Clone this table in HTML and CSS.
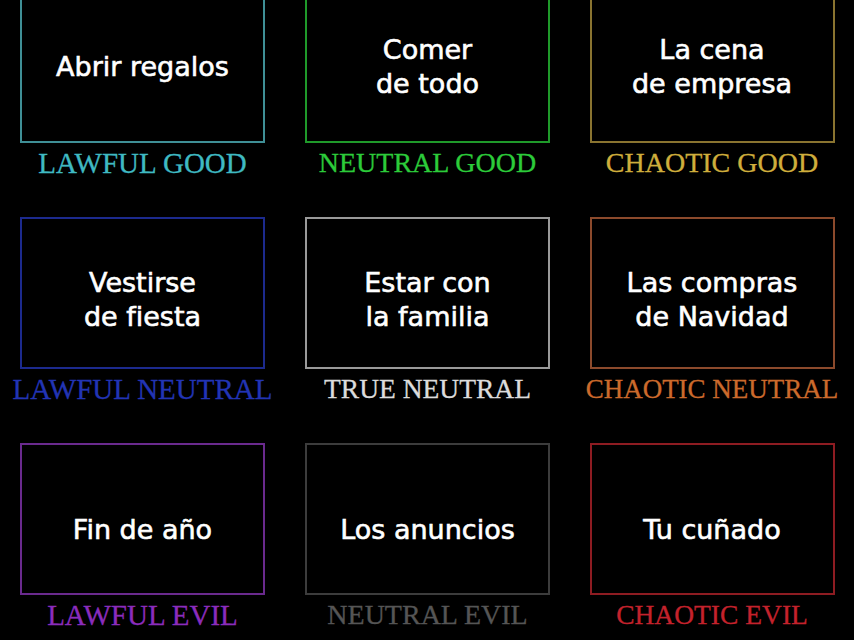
FILE: index.html
```html
<!DOCTYPE html>
<html lang="es">
<head>
<meta charset="utf-8">
<title>Alignment chart</title>
<link rel="stylesheet" href="styles.css">
</head>
<body>
<main class="chart">
  <section class="cell lg">
    <div class="box">Abrir regalos</div>
    <div class="label">LAWFUL GOOD</div>
  </section>
  <section class="cell ng">
    <div class="box">Comer<br>de todo</div>
    <div class="label">NEUTRAL GOOD</div>
  </section>
  <section class="cell cg">
    <div class="box">La cena<br>de empresa</div>
    <div class="label">CHAOTIC GOOD</div>
  </section>

  <section class="cell ln row2">
    <div class="box">Vestirse<br>de fiesta</div>
    <div class="label">LAWFUL NEUTRAL</div>
  </section>
  <section class="cell tn row2">
    <div class="box">Estar con<br>la familia</div>
    <div class="label">TRUE NEUTRAL</div>
  </section>
  <section class="cell cn row2">
    <div class="box">Las compras<br>de Navidad</div>
    <div class="label">CHAOTIC NEUTRAL</div>
  </section>

  <section class="cell le row3">
    <div class="box">Fin de año</div>
    <div class="label">LAWFUL EVIL</div>
  </section>
  <section class="cell ne row3">
    <div class="box">Los anuncios</div>
    <div class="label">NEUTRAL EVIL</div>
  </section>
  <section class="cell ce row3">
    <div class="box">Tu cuñado</div>
    <div class="label">CHAOTIC EVIL</div>
  </section>
</main>
</body>
</html>
```

FILE: styles.css
```css
html, body {
  margin: 0;
  padding: 0;
  background: #000;
  overflow: hidden;
}

.chart {
  display: grid;
  grid-template-columns: 285px 285px 284px;
  row-gap: 40px;
  margin-top: -9px;
}

.cell {
  display: flex;
  flex-direction: column;
  align-items: center;
}

.box {
  box-sizing: border-box;
  width: 245px;
  height: 152px;
  border: 2px solid #888;
  display: flex;
  align-items: center;
  justify-content: center;
  text-align: center;
  color: #fff;
  font-family: "DejaVu Sans", Verdana, sans-serif;
  font-size: 27px;
  line-height: 34px;
  -webkit-text-stroke: 0.6px #fff;
}

.row2 .box { padding-top: 14px; }
.row3 .box { padding-top: 22px; }

.label {
  margin-top: 6px;
  font-family: "Liberation Serif", "Times New Roman", serif;
  font-size: 28px;
  line-height: 28px;
  white-space: nowrap;
  -webkit-text-stroke: 0.3px currentColor;
}

.lg .box { border-color: #3f8f96; }
.lg .label { color: #3fb9c2; font-size: 29px; }

.ng .box { border-color: #1f9a2a; }
.ng .label { color: #2ccb3a; }

.cg .box { border-color: #8a7430; }
.cg .label { color: #cfae3c; }

.ln .box { border-color: #1c2a8e; }
.ln .label { color: #2234b4; font-size: 29px; }

.tn .box { border-color: #9a9a9a; }
.tn .label { color: #dcdcdc; font-size: 27.5px; }

.cn .box { border-color: #8c4a2c; }
.cn .label { color: #cc6a2c; font-size: 27px; }

.le .box { border-color: #6a2a8e; }
.le .label { color: #8a2cbc; font-size: 29px; }

.ne .box { border-color: #3c3c3c; }
.ne .label { color: #555; }

.ce .box { border-color: #8e1c22; }
.ce .label { color: #c4222c; font-size: 27.5px; }
```
